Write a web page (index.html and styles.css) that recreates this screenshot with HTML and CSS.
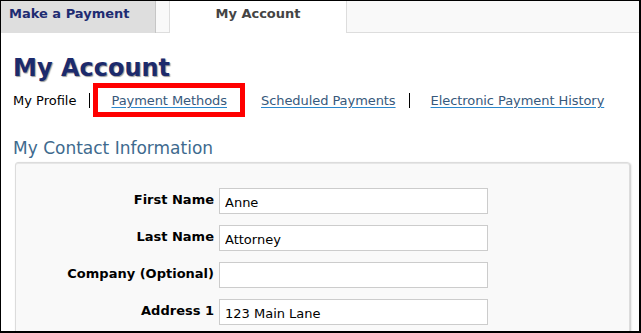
FILE: index.html
```html
<!DOCTYPE html>
<html>
<head>
<meta charset="utf-8">
<link rel="stylesheet" href="styles.css">
</head>
<body>
<div class="frame">
  <div class="tabs">
    <div class="tab tab-inactive">Make a Payment</div>
    <div class="tab-gap"></div>
    <div class="tab tab-active">My Account</div>
  </div>
  <div class="content">
    <h1 class="page-title">My Account</h1>
    <nav class="subnav">
      <span class="subnav-current">My Profile</span>
      <span class="sep"></span>
      <span class="highlight"><a class="subnav-link" href="#">Payment Methods</a></span>
      <a class="subnav-link after-highlight" href="#">Scheduled Payments</a>
      <span class="sep"></span>
      <a class="subnav-link" href="#">Electronic Payment History</a>
    </nav>
    <h2 class="section-title">My Contact Information</h2>
    <div class="panel">
      <form class="form-grid">
        <label class="field-label">First Name</label>
        <input class="field-input" type="text" value="Anne">
        <label class="field-label">Last Name</label>
        <input class="field-input" type="text" value="Attorney">
        <label class="field-label">Company (Optional)</label>
        <input class="field-input" type="text" value="">
        <label class="field-label">Address 1</label>
        <input class="field-input" type="text" value="123 Main Lane">
      </form>
    </div>
  </div>
</div>
</body>
</html>
```

FILE: styles.css
```css
html, body {
  margin: 0;
  padding: 0;
  background: #ffffff;
}

body {
  font-family: "DejaVu Sans", Verdana, sans-serif;
  font-size: 13px;
  color: #000;
}

.frame {
  width: 638px;
  height: 330px;
  border-style: solid;
  border-color: #000;
  border-width: 1px 2px 2px 1px;
  overflow: hidden;
  background: #fff;
}

.tabs {
  display: flex;
  height: 32px;
  background: #f9f9f9;
  box-shadow: inset 0 -1px 0 #dddddd;
}

.tab {
  font-weight: bold;
  font-size: 13px;
  line-height: 16px;
  padding-top: 5px;
  box-sizing: border-box;
}

.tab-inactive {
  width: 155px;
  height: 32px;
  background: #dedede;
  border-right: 1px solid #c6c6c6;
  padding-left: 8px;
  color: #1e2c72;
}

.tab-gap {
  width: 13px;
}

.tab-active {
  width: 178px;
  height: 32px;
  background: #fff;
  border-left: 1px solid #dddddd;
  border-right: 1px solid #dddddd;
  text-align: center;
  color: #444444;
}

.content {
  padding: 0 0 0 12px;
}

.page-title {
  margin: 0;
  padding-top: 20px;
  font-size: 24px;
  line-height: 30px;
  font-weight: bold;
  color: #1c2a6c;
  text-shadow: 1px 1px 1px #9a9a9a;
}

.subnav {
  display: flex;
  align-items: center;
  height: 34px;
  font-size: 13px;
}

.subnav-current {
  color: #000;
}

.sep {
  display: inline-block;
  width: 1px;
  height: 15px;
  background: #000;
  margin: 0 21px 0 13px;
}

.highlight {
  display: inline-flex;
  align-items: center;
  box-sizing: border-box;
  height: 34px;
  border: 5px solid #ff0000;
  padding: 0 13px;
  margin-left: -18px;
  margin-right: 16px;
}

.subnav-link {
  color: #37597c;
  letter-spacing: -0.07px;
  text-decoration: underline;
  text-decoration-color: #2a87cc;
  text-underline-offset: 2px;
}

.section-title {
  margin: 0;
  padding-top: 21px;
  font-size: 17px;
  line-height: 20px;
  font-weight: normal;
  color: #3e6a8e;
}

.panel {
  margin: 4px 0 0 2px;
  width: 615px;
  height: 200px;
  background: #f9f9f9;
  border: 1px solid #dcdcdc;
  border-radius: 3px;
  box-shadow: 1px 1px 2px #c8c8c8, inset 0 1px 0 #e6e6e6;
  box-sizing: border-box;
  padding-top: 25px;
}

.form-grid {
  display: grid;
  grid-template-columns: 198px 269px;
  column-gap: 5px;
  row-gap: 11px;
  align-items: center;
  margin: 0;
}

.field-label {
  text-align: right;
  font-weight: bold;
  font-size: 13px;
  color: #000;
  margin-top: -3px;
}

.field-input {
  box-sizing: border-box;
  width: 269px;
  height: 26px;
  margin: 0;
  border: 1px solid #cccccc;
  background: #fff;
  padding: 2px 5px 0;
  font-family: "DejaVu Sans", Verdana, sans-serif;
  font-size: 13px;
  color: #000;
  outline: none;
}
```
